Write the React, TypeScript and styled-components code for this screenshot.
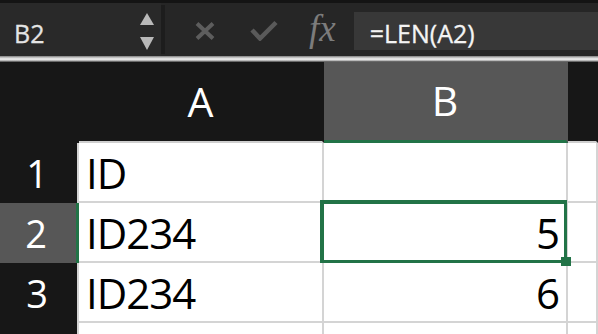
import React from "react";
import styled, { createGlobalStyle } from "styled-components";

const columns = ["A", "B"];
const rows = [
  { n: "1", a: "ID", b: "" },
  { n: "2", a: "ID234", b: "5" },
  { n: "3", a: "ID234", b: "6" },
  { n: "", a: "", b: "" },
];
const activeRow = "2";

const App: React.FC = () => {
  return (
    <Page>
      <GlobalStyle />
      <TopStrip />
      <Toolbar>
        <NameBox>
          <span>B2</span>
          <svg width="14" height="37" viewBox="0 0 14 37">
            <polygon points="7,0 14,12 0,12" fill="#b9b9b9" />
            <polygon points="0,24 14,24 7,37" fill="#b9b9b9" />
          </svg>
        </NameBox>
        <Divider />
        <Cancel width="20" height="18" viewBox="0 0 20 18">
          <path d="M2 1.5 18 16.5M18 1.5 2 16.5" stroke="#5d5d5d" strokeWidth="4" />
        </Cancel>
        <Confirm width="28" height="21" viewBox="0 0 28 21">
          <polyline points="2,10 10,18.5 26,2.5" fill="none" stroke="#5a5a5a" strokeWidth="4.5" />
        </Confirm>
        <Fx>fx</Fx>
        <FormulaInput>=LEN(A2)</FormulaInput>
      </Toolbar>
      <Seam />
      <Sheet>
        <Corner />
        {columns.map((c) => (
          <ColHeader key={c} $active={c === "B"}>
            {c}
          </ColHeader>
        ))}
        <ColHeader $rest />
        {rows.map((r, i) => (
          <React.Fragment key={i}>
            <RowHeader $active={r.n === activeRow}>{r.n}</RowHeader>
            <Cell>{r.a}</Cell>
            <Cell $num>
              {r.b}
              {r.n === activeRow && (
                <Selection>
                  <Handle />
                </Selection>
              )}
            </Cell>
            <Cell />
          </React.Fragment>
        ))}
      </Sheet>
    </Page>
  );
};

export default App;

const GlobalStyle = createGlobalStyle`
  html, body {
    margin: 0;
    background: #171717;
    overflow: hidden;
  }
  * {
    box-sizing: border-box;
  }
`;

const Page = styled.div`
  width: 598px;
  height: 334px;
  overflow: hidden;
  font-family: "Open Sans", "Noto Sans", sans-serif;
`;

const TopStrip = styled.div`
  height: 3px;
  background: #141414;
`;

const Toolbar = styled.div`
  display: flex;
  align-items: center;
  height: 53px;
  background: #262626;
`;

const NameBox = styled.div`
  display: flex;
  align-items: center;
  justify-content: space-between;
  width: 161px;
  height: 100%;
  padding: 4px 7px 0 14px;
  background: #292929;
  color: #e4e4e4;
  font-size: 25px;
  span {
    margin-top: 3px;
    -webkit-text-stroke: 0.3px #e4e4e4;
  }
`;

const Divider = styled.div`
  align-self: stretch;
  width: 4px;
  margin: 2px 0;
  background: #1d1d1d;
`;

const Cancel = styled.svg`
  margin: 3px 0 0 30px;
`;

const Confirm = styled.svg`
  margin: 2px 0 0 35px;
`;

const Fx = styled.span`
  margin: 0 18px 0 31px;
  font-family: "Liberation Serif", "DejaVu Serif", serif;
  font-style: italic;
  font-size: 37px;
  line-height: 1;
  color: #7c7c7c;
  padding-bottom: 3px;
`;

const FormulaInput = styled.div`
  flex: 1;
  display: flex;
  align-items: center;
  align-self: stretch;
  margin: 9px 0 6px;
  padding: 3px 0 0 16px;
  background: #383838;
  color: #f4f4f4;
  font-size: 25px;
  -webkit-text-stroke: 0.3px #f4f4f4;
`;

const Seam = styled.div`
  height: 6px;
  background: linear-gradient(#7d7d7d, #d9d9d9 35%, #eeeeee 55%, #9c9c9c 85%, #2a2a2a);
`;

const Sheet = styled.div`
  display: grid;
  grid-template-columns: 79px 245px 244px 1fr;
  grid-template-rows: 81px repeat(4, 60px);
  background: #ffffff;
`;

const Corner = styled.div`
  background: #171717;
`;

const ColHeader = styled.div<{ $active?: boolean; $rest?: boolean }>`
  display: flex;
  align-items: center;
  justify-content: center;
  padding-bottom: 2px;
  background: ${(p) => (p.$active ? "#575757" : "#171717")};
  border-bottom: ${(p) => (p.$active ? "3px solid #227347" : "2px solid #cfcfcf")};
  border-right: 2px solid ${(p) => (p.$active || p.$rest ? "transparent" : "#171717")};
  color: #ffffff;
  font-size: 41px;
`;

const RowHeader = styled.div<{ $active?: boolean }>`
  display: flex;
  align-items: center;
  justify-content: center;
  padding-right: ${(p) => (p.$active ? "4px" : "3px")};
  background: ${(p) => (p.$active ? "#575757" : "#171717")};
  border-right: ${(p) => (p.$active ? "3px solid #227347" : "2px solid #d4d4d4")};
  color: #ffffff;
  font-size: 38px;
`;

const Cell = styled.div<{ $num?: boolean }>`
  position: relative;
  display: flex;
  align-items: center;
  justify-content: ${(p) => (p.$num ? "flex-end" : "flex-start")};
  padding: 0 ${(p) => (p.$num ? "7px" : "0")} 0 ${(p) => (p.$num ? "0" : "7px")};
  border-right: 2px solid #d4d4d4;
  border-bottom: 2px solid #d4d4d4;
  color: #000000;
  font-size: 42px;
  letter-spacing: -1px;
`;

const Selection = styled.div`
  position: absolute;
  z-index: 2;
  left: -4px;
  top: -3px;
  right: -1px;
  bottom: -2px;
  border: 3px solid #227347;
  border-left-width: 4px;
  border-top-width: 4px;
  pointer-events: none;
`;

const Handle = styled.div`
  position: absolute;
  right: -7px;
  bottom: -6px;
  width: 10px;
  height: 9px;
  background: #227347;
`;
